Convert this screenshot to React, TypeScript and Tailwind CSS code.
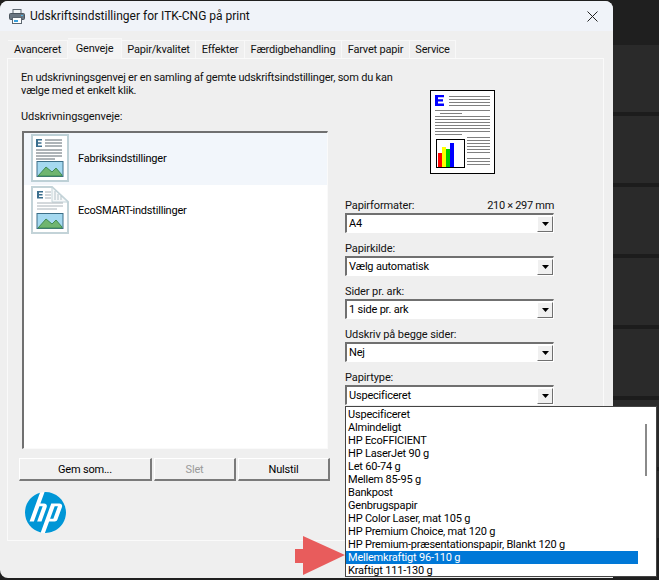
import { SiHp } from 'react-icons/si';

const font = { fontFamily: 'Roboto, sans-serif' };

const tabs = [
    { label: 'Avanceret', w: 'w-[60px]' },
    { label: 'Genveje', w: 'w-[54px]', active: true },
    { label: 'Papir/kvalitet', w: 'w-[74px]' },
    { label: 'Effekter', w: 'w-[49px]' },
    { label: 'Færdigbehandling', w: 'w-[97px]' },
    { label: 'Farvet papir', w: 'w-[68px]' },
    { label: 'Service', w: 'w-[46px]' },
];

const paperTypes = [
    'Uspecificeret',
    'Almindeligt',
    'HP EcoFFICIENT',
    'HP LaserJet 90 g',
    'Let 60-74 g',
    'Mellem 85-95 g',
    'Bankpost',
    'Genbrugspapir',
    'HP Color Laser, mat 105 g',
    'HP Premium Choice, mat 120 g',
    'HP Premium-præsentationspapir, Blankt 120 g',
    'Mellemkraftigt 96-110 g',
    'Kraftigt 111-130 g',
];

function PrinterIcon() {
    return (
        <svg width="16" height="15" viewBox="0 0 16 15" className="shrink-0">
            <rect x="4" y="0.5" width="8" height="4" fill="#f4f6f8" stroke="#5c6670" />
            <rect x="0.5" y="4.5" width="15" height="6" rx="1" fill="#6b7681" stroke="#4a545e" />
            <rect x="12" y="6" width="2" height="1" fill="#49b5e8" />
            <rect x="3.5" y="8.5" width="9" height="6" fill="#fff" stroke="#5c6670" />
            <rect x="5" y="11" width="4" height="2" fill="#3aa0dc" />
        </svg>
    );
}

function ShortcutIcon({ eco }: { eco?: boolean }) {
    return (
        <svg width="38" height="48" viewBox="0 0 38 48" className="shrink-0">
            {eco ? (
                <>
                    <path d="M1 1H21L37 16V47H1Z" fill="#fff" stroke="#c3d3d8" strokeWidth="2" />
                    <path d="M21 2V16H36" fill="#f6f8f9" stroke="#c3d3d8" />
                    <path d="M24 5V14M27 8V14M30 10V14" stroke="#b4c2c8" />
                    <path d="M6 5H12V6.5H8V8H11.5V9.5H8V11H12V12.500H6Z" fill="#3b6f8e" />
                    <path d="M14 6H20M14 9H20M14 12H20M6 17H32M6 20H32M6 23H26" stroke="#a9b2b8" />
                </>
            ) : (
                <>
                    <rect x="1" y="1" width="36" height="46" fill="#fff" stroke="#bdd0d6" strokeWidth="2" />
                    <path d="M5 5H11V6.500H7V8.200H10.500V9.700H7V11.500H11V13H5Z" fill="#3b6f8e" />
                    <path d="M14 6H31M14 9H31M14 12H31M5 16H31M5 19H31M5 22H31M5 25H24" stroke="#5d6870" />
                </>
            )}
            <rect x="6" y="27.500" width="26" height="15" fill="#a5d9f0" stroke="#3c6f88" />
            <path d="M7 42L15 33L21 38L25 34L31 41V42Z" fill="#6fb56f" stroke="#3f8a55" />
        </svg>
    );
}

function Line({ className = '' }: { className?: string }) {
    return <div className={`h-px bg-[#808080] ${className}`} />;
}

function PagePreview() {
    return (
        <div className="ml-[85px] flex h-[84px] w-[65px] flex-col border border-black bg-white px-[4px] pt-[4px]">
            <div className="flex h-[11px] gap-[4px]">
                <svg width="10" height="11" viewBox="0 0 10 11" className="shrink-0">
                    <path d="M0 0H9V2.300H3V4.200H8V6.500H3V8.400H9V11H0Z" fill="#0000ff" />
                </svg>
                <div className="flex flex-1 flex-col gap-[2px] pt-px">
                    <Line />
                    <Line />
                    <Line />
                    <Line />
                </div>
            </div>
            <div className="mt-[4px] flex flex-col gap-[2px]">
                <Line />
                <Line className="ml-[5px] w-[22px]" />
                <Line />
                <Line />
                <Line />
                <Line />
                <Line />
                <Line />
                <Line className="w-[27px]" />
            </div>
            <div className="mt-[2px] flex justify-between">
                <div className="mt-[2px] ml-px flex h-[29px] w-[29px] items-end border border-black bg-white pl-px">
                    <div className="h-[14px] w-[4px] bg-[#ff0000]" />
                    <div className="h-[20px] w-[4px] bg-[#ffff00]" />
                    <div className="h-[18px] w-[4px] bg-[#00cc00]" />
                    <div className="h-[24px] w-[4px] bg-[#0000ff]" />
                </div>
                <div className="flex w-[23px] flex-col gap-[2px]">
                    <Line />
                    <Line />
                    <Line />
                    <Line />
                    <Line />
                    <Line />
                    <Line className="mt-[3px]" />
                    <Line />
                    <Line />
                </div>
            </div>
        </div>
    );
}

function Combo({ value }: { value: string }) {
    return (
        <div className="flex h-[20px] w-[209px] items-center border-t-2 border-r border-b border-l-2 border-t-[#707070] border-r-white border-b-white border-l-[#707070] bg-white">
            <span className="flex-1 pl-[2px] leading-[13px] text-black">{value}</span>
            <div className="flex h-[16px] w-[16px] items-center justify-center border border-t-white border-r-[#707070] border-b-[#707070] border-l-white bg-[#f0f0f0]">
                <svg width="7" height="4" viewBox="0 0 7 4"><path d="M0 0H7L3.500 4Z" fill="#000" /></svg>
            </div>
        </div>
    );
}

function Field({ label, value, right }: { label: string; value: string; right?: string }) {
    return (
        <div className="flex w-[209px] flex-col gap-px">
            <div className="flex h-[13px] justify-between leading-[13px] tracking-[-0.1px]">
                <span>{label}</span>
                {right && <span className="tracking-[-0.3px]">{right}</span>}
            </div>
            <Combo value={value} />
        </div>
    );
}

function Btn({ label, w, disabled }: { label: string; w: string; disabled?: boolean }) {
    return (
        <button className={`h-[23px] ${w} border-t border-r-2 border-b-2 border-l border-t-white border-r-[#7a7a7a] border-b-[#7a7a7a] border-l-white bg-[#f0f0f0] leading-[13px] ${disabled ? 'text-[#9a9a9a]' : 'text-black'}`}>
            {label}
        </button>
    );
}

function ShortcutRow({ label, eco, selected }: { label: string; eco?: boolean; selected?: boolean }) {
    return (
        <div className={`flex h-[52px] items-center gap-[9px] pb-[2px] pl-[7px] ${selected ? 'bg-[#f2f6fb]' : 'bg-white'}`}>
            <ShortcutIcon eco={eco} />
            <span className="leading-[13px] text-black">{label}</span>
        </div>
    );
}

export default function App() {
    return (
        <div style={font} className="relative flex h-[580px] w-[659px] overflow-hidden bg-[#1f1f1f] text-[11px] tracking-[-0.2px] whitespace-nowrap text-[#111]">
            <div className="mt-px flex h-[577px] w-[613px] flex-col rounded-t-lg rounded-bl-lg bg-[#efefef]">
                <div className="flex h-[30px] items-center gap-[5px] rounded-t-lg bg-[#f0f3f9] pr-[15px] pl-[9px]">
                    <PrinterIcon />
                    <span className="flex-1 text-[12px] tracking-normal">Udskriftsindstillinger for ITK-CNG på print</span>
                    <svg width="11" height="11" viewBox="0 0 11 11"><path d="M0.500 0.500L10.500 10.500M10.500 0.500L0.500 10.500" stroke="#222" /></svg>
                </div>

                <div className="flex h-[27px] items-end pl-[8px]">
                    {tabs.map((t) => (
                        <div
                            key={t.label}
                            className={`flex items-center justify-center border-t border-r border-[#f8f8f8] ${t.w} ${t.active ? 'relative z-10 -mb-px h-[21px] bg-[#f4f4f4]' : 'h-[18px] pt-px'}`}
                        >
                            {t.label}
                        </div>
                    ))}
                </div>

                <div className="mx-[7px] flex h-[483px] w-[597px] border border-[#fafafa]">
                    <div className="flex w-[337px] flex-col pt-[12px] pl-[13px]">
                        <p className="leading-[13px]">
                            En udskrivningsgenvej er en samling af gemte udskriftsindstillinger, som du kan<br />
                            vælge med et enkelt klik.
                        </p>
                        <p className="mt-[13px] leading-[13px] tracking-[-0.1px]">Udskrivningsgenveje:</p>
                        <div className="mt-[8px] ml-px h-[318px] w-[306px] border-t-2 border-r border-b border-l-2 border-t-[#707070] border-r-[#fafafa] border-b-[#fafafa] border-l-[#707070] bg-white">
                            <ShortcutRow label="Fabriksindstillinger" selected />
                            <ShortcutRow label="EcoSMART-indstillinger" eco />
                        </div>
                        <div className="mt-[9px] -ml-[2px] flex gap-[2px]">
                            <Btn label="Gem som..." w="w-[133px]" />
                            <Btn label="Slet" w="w-[82px]" disabled />
                            <Btn label="Nulstil" w="w-[92px]" />
                        </div>
                        <div className="mt-[11px] ml-[4px] h-[41px] w-[41px] rounded-full bg-white">
                            <SiHp size={41} color="#0096d6" />
                        </div>
                    </div>

                    <div className="flex flex-col pt-[31px]">
                        <PagePreview />
                        <div className="mt-[25px] flex flex-col gap-[9px]">
                            <Field label="Papirformater:" value="A4" right="210 × 297 mm" />
                            <Field label="Papirkilde:" value="Vælg automatisk" />
                            <Field label="Sider pr. ark:" value="1 side pr. ark" />
                            <Field label="Udskriv på begge sider:" value="Nej" />
                            <Field label="Papirtype:" value="Uspecificeret" />
                        </div>
                    </div>
                </div>
            </div>

            <div className="flex flex-1 flex-col">
                <div className="h-[45px] bg-[#1f1f1f]" />
                {[0, 1, 2, 3, 4, 5, 6].map((i) => (
                    <div key={i} className="h-[71px] border-b-[4px] border-b-[#1c1c1c] bg-[#2a2a2a]" />
                ))}
            </div>

            {/* open paper type list */}
            <div className="absolute top-[406px] left-[345px] h-[171px] w-[312px] border border-[#444] bg-white pt-px leading-[13px] text-black">
                {paperTypes.map((p) => (
                    <div key={p} className={`h-[13px] w-[292px] pl-[2px] ${p.startsWith('Mellemkraftigt') ? 'bg-[#0078d7] text-white' : ''}`}>{p}</div>
                ))}
                <div className="absolute top-[17px] right-[9px] h-[52px] w-[2px] bg-[#8a8a8a]" />
            </div>

            {/* red pointer arrow */}
            <svg width="52" height="42" viewBox="0 0 52 42" className="absolute top-[535px] left-[294px]">
                <path d="M1 14H9V1L51 20L9 40V28H1Z" fill="#e85c5c" />
            </svg>
        </div>
    );
}
